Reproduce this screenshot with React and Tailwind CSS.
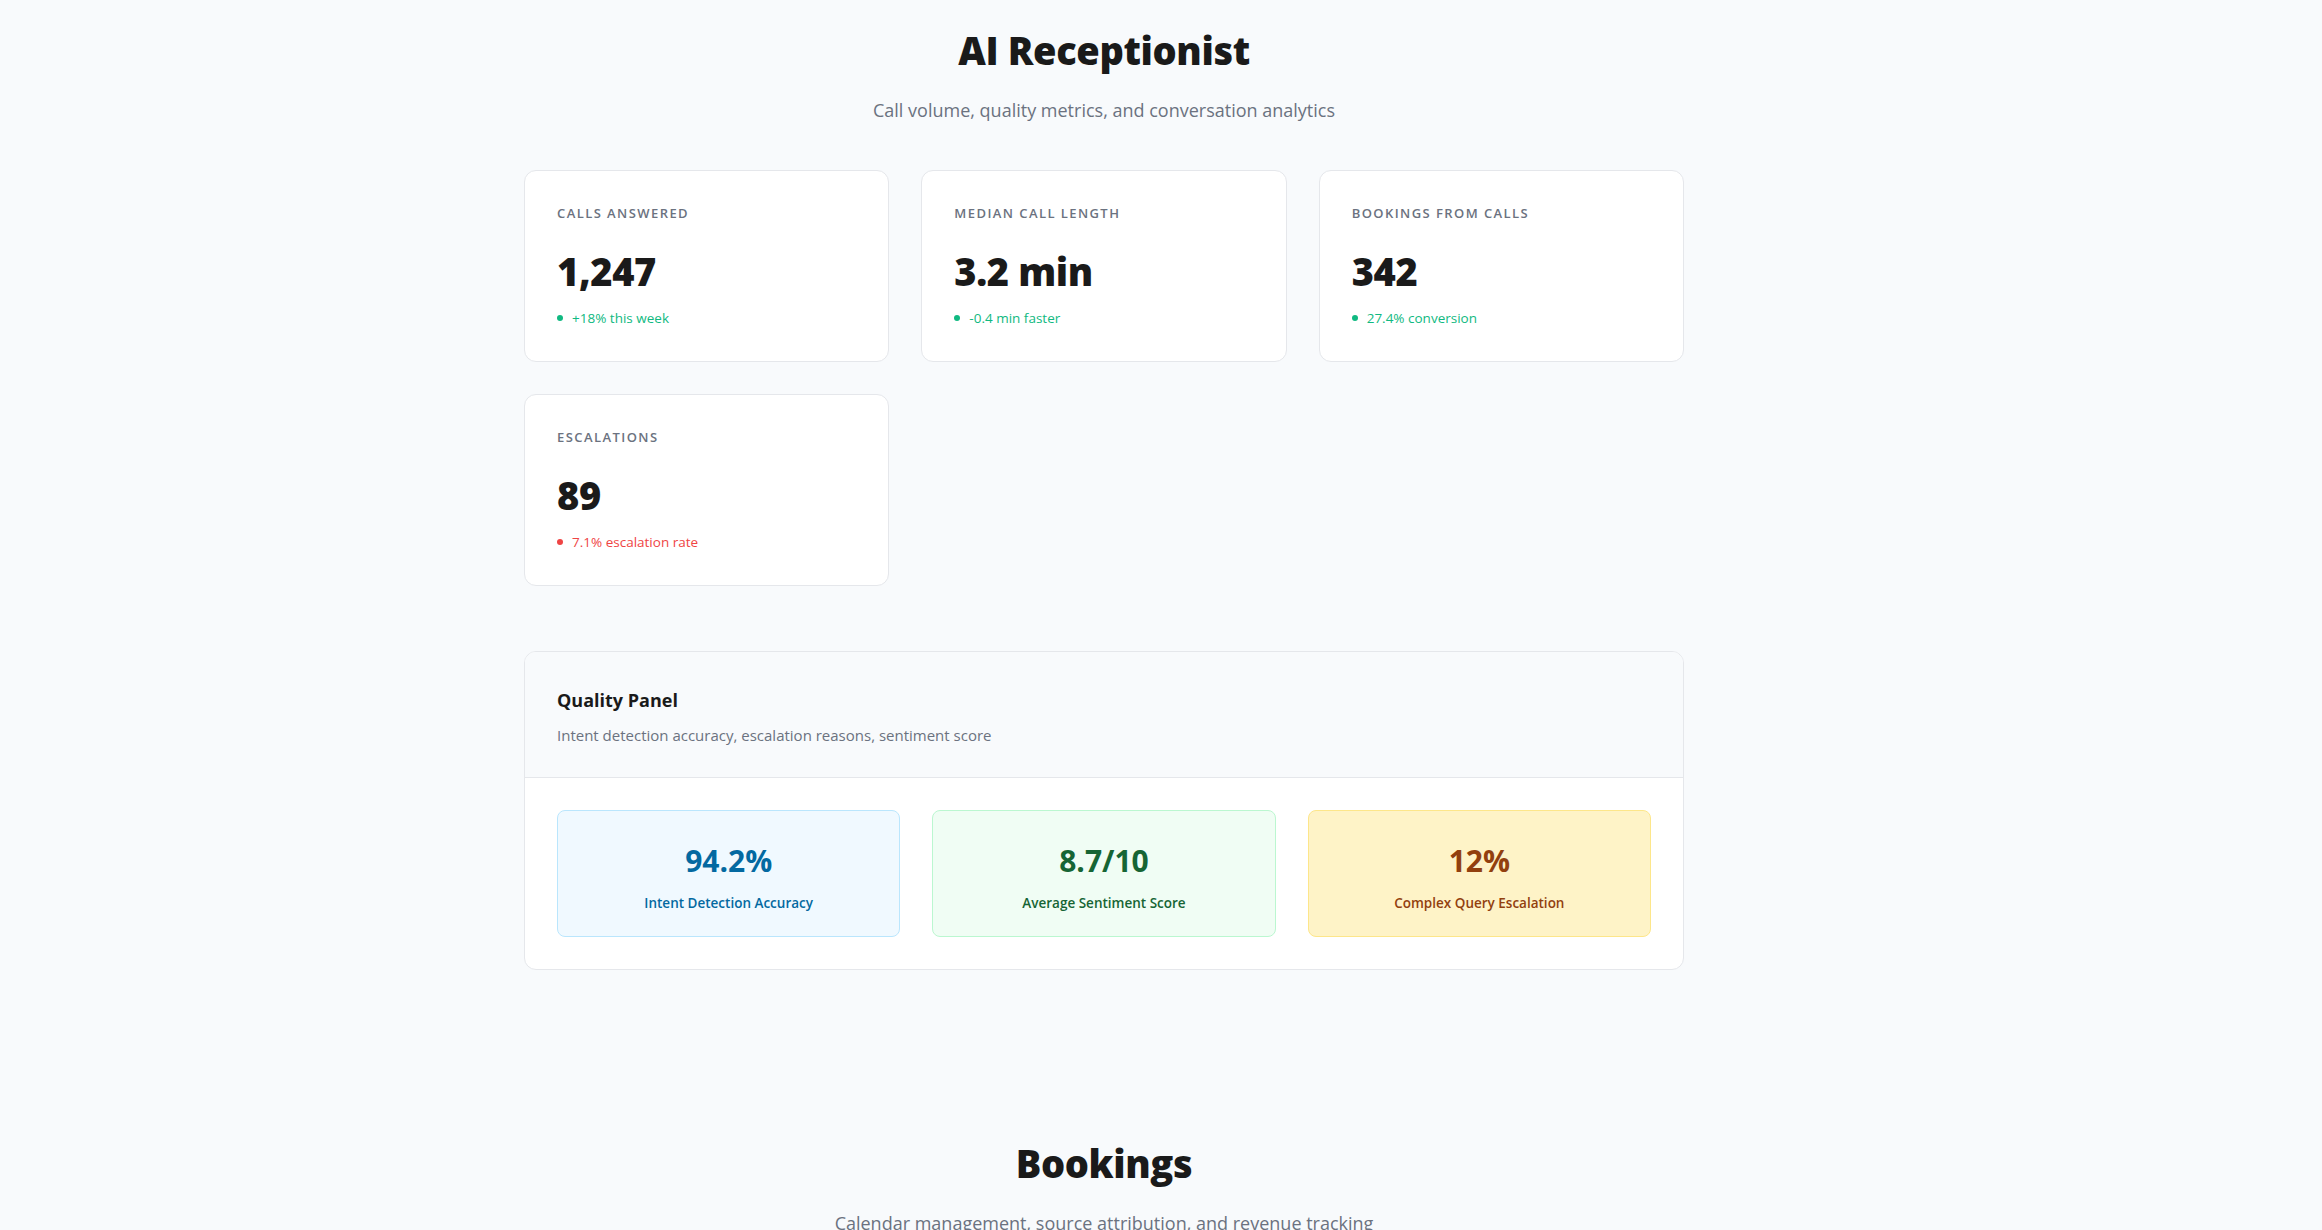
import React from "react";

const stats = [
  { label: "Calls Answered", value: "1,247", note: "+18% this week", tone: "up" },
  { label: "Median Call Length", value: "3.2 min", note: "-0.4 min faster", tone: "up" },
  { label: "Bookings From Calls", value: "342", note: "27.4% conversion", tone: "up" },
  { label: "Escalations", value: "89", note: "7.1% escalation rate", tone: "down" },
];

const quality = [
  {
    value: "94.2%",
    label: "Intent Detection Accuracy",
    box: "bg-[#f0f9ff] border-[#bae6fd] text-[#0369a1]",
  },
  {
    value: "8.7/10",
    label: "Average Sentiment Score",
    box: "bg-[#f0fdf4] border-[#bbf7d0] text-[#166534]",
  },
  {
    value: "12%",
    label: "Complex Query Escalation",
    box: "bg-[#fef3c7] border-[#fde68a] text-[#92400e]",
  },
];

function StatCard({ label, value, note, tone }) {
  const isUp = tone === "up";
  return (
    <div className="bg-white border border-[#e5e7eb] rounded-xl px-8 pt-8 pb-[33px]">
      <div className="text-[13px] leading-[20px] font-semibold uppercase tracking-[0.11em] text-[#6b7280]">
        {label}
      </div>
      <div className="mt-[24px] text-[38px] leading-[48px] font-extrabold tracking-[-0.01em] text-[#1a1a1a]">
        {value}
      </div>
      <div
        className={`mt-[13px] flex items-center gap-[9px] text-[13.5px] leading-[20px] font-medium ${
          isUp ? "text-[#10b981]" : "text-[#ef4444]"
        }`}
      >
        <span
          className={`w-[6px] h-[6px] rounded-full ${
            isUp ? "bg-[#10b981]" : "bg-[#ef4444]"
          }`}
        />
        {note}
      </div>
    </div>
  );
}

function SectionHeader({ title, subtitle }) {
  return (
    <div className="text-center">
      <h1 className="text-[38px] leading-[48px] font-extrabold tracking-[-0.01em] text-[#1a1a1a]">
        {title}
      </h1>
      <p className="mt-[22px] text-[18px] leading-7 text-[#6b7280]">{subtitle}</p>
    </div>
  );
}

export default function App() {
  return (
    <div
      className="min-h-screen bg-[#f8fafc]"
      style={{ fontFamily: '"Open Sans", "Noto Sans", sans-serif' }}
    >
      <div className="w-[2208px]">
        {/* AI Receptionist */}
        <section className="w-[1160px] mx-auto pt-[26px]">
          <SectionHeader
            title="AI Receptionist"
            subtitle="Call volume, quality metrics, and conversation analytics"
          />

          <div className="mt-[46px] grid grid-cols-3 gap-8">
            {stats.map((s) => (
              <StatCard key={s.label} {...s} />
            ))}
          </div>

          {/* Quality panel */}
          <div className="mt-[65px] bg-white border border-[#e5e7eb] rounded-xl overflow-hidden">
            <div className="bg-[#f8fafc] border-b border-[#e5e7eb] px-8 pt-[34px] pb-8">
              <h2 className="text-[18px] leading-7 font-bold text-[#1a1a1a]">
                Quality Panel
              </h2>
              <p className="mt-[11px] text-[15px] leading-5 text-[#6b7280]">
                Intent detection accuracy, escalation reasons, sentiment score
              </p>
            </div>
            <div className="p-8 grid grid-cols-3 gap-8">
              {quality.map((q) => (
                <div
                  key={q.label}
                  className={`border rounded-lg text-center pt-8 pb-[23px] ${q.box}`}
                >
                  <div className="text-[30px] leading-[36px] font-bold">
                    {q.value}
                  </div>
                  <div className="mt-[14px] text-[13.5px] leading-5 font-semibold">
                    {q.label}
                  </div>
                </div>
              ))}
            </div>
          </div>
        </section>

        {/* Bookings */}
        <section className="w-[1160px] mx-auto pt-[169px] pb-20">
          <SectionHeader
            title="Bookings"
            subtitle="Calendar management, source attribution, and revenue tracking"
          />
        </section>
      </div>
    </div>
  );
}
